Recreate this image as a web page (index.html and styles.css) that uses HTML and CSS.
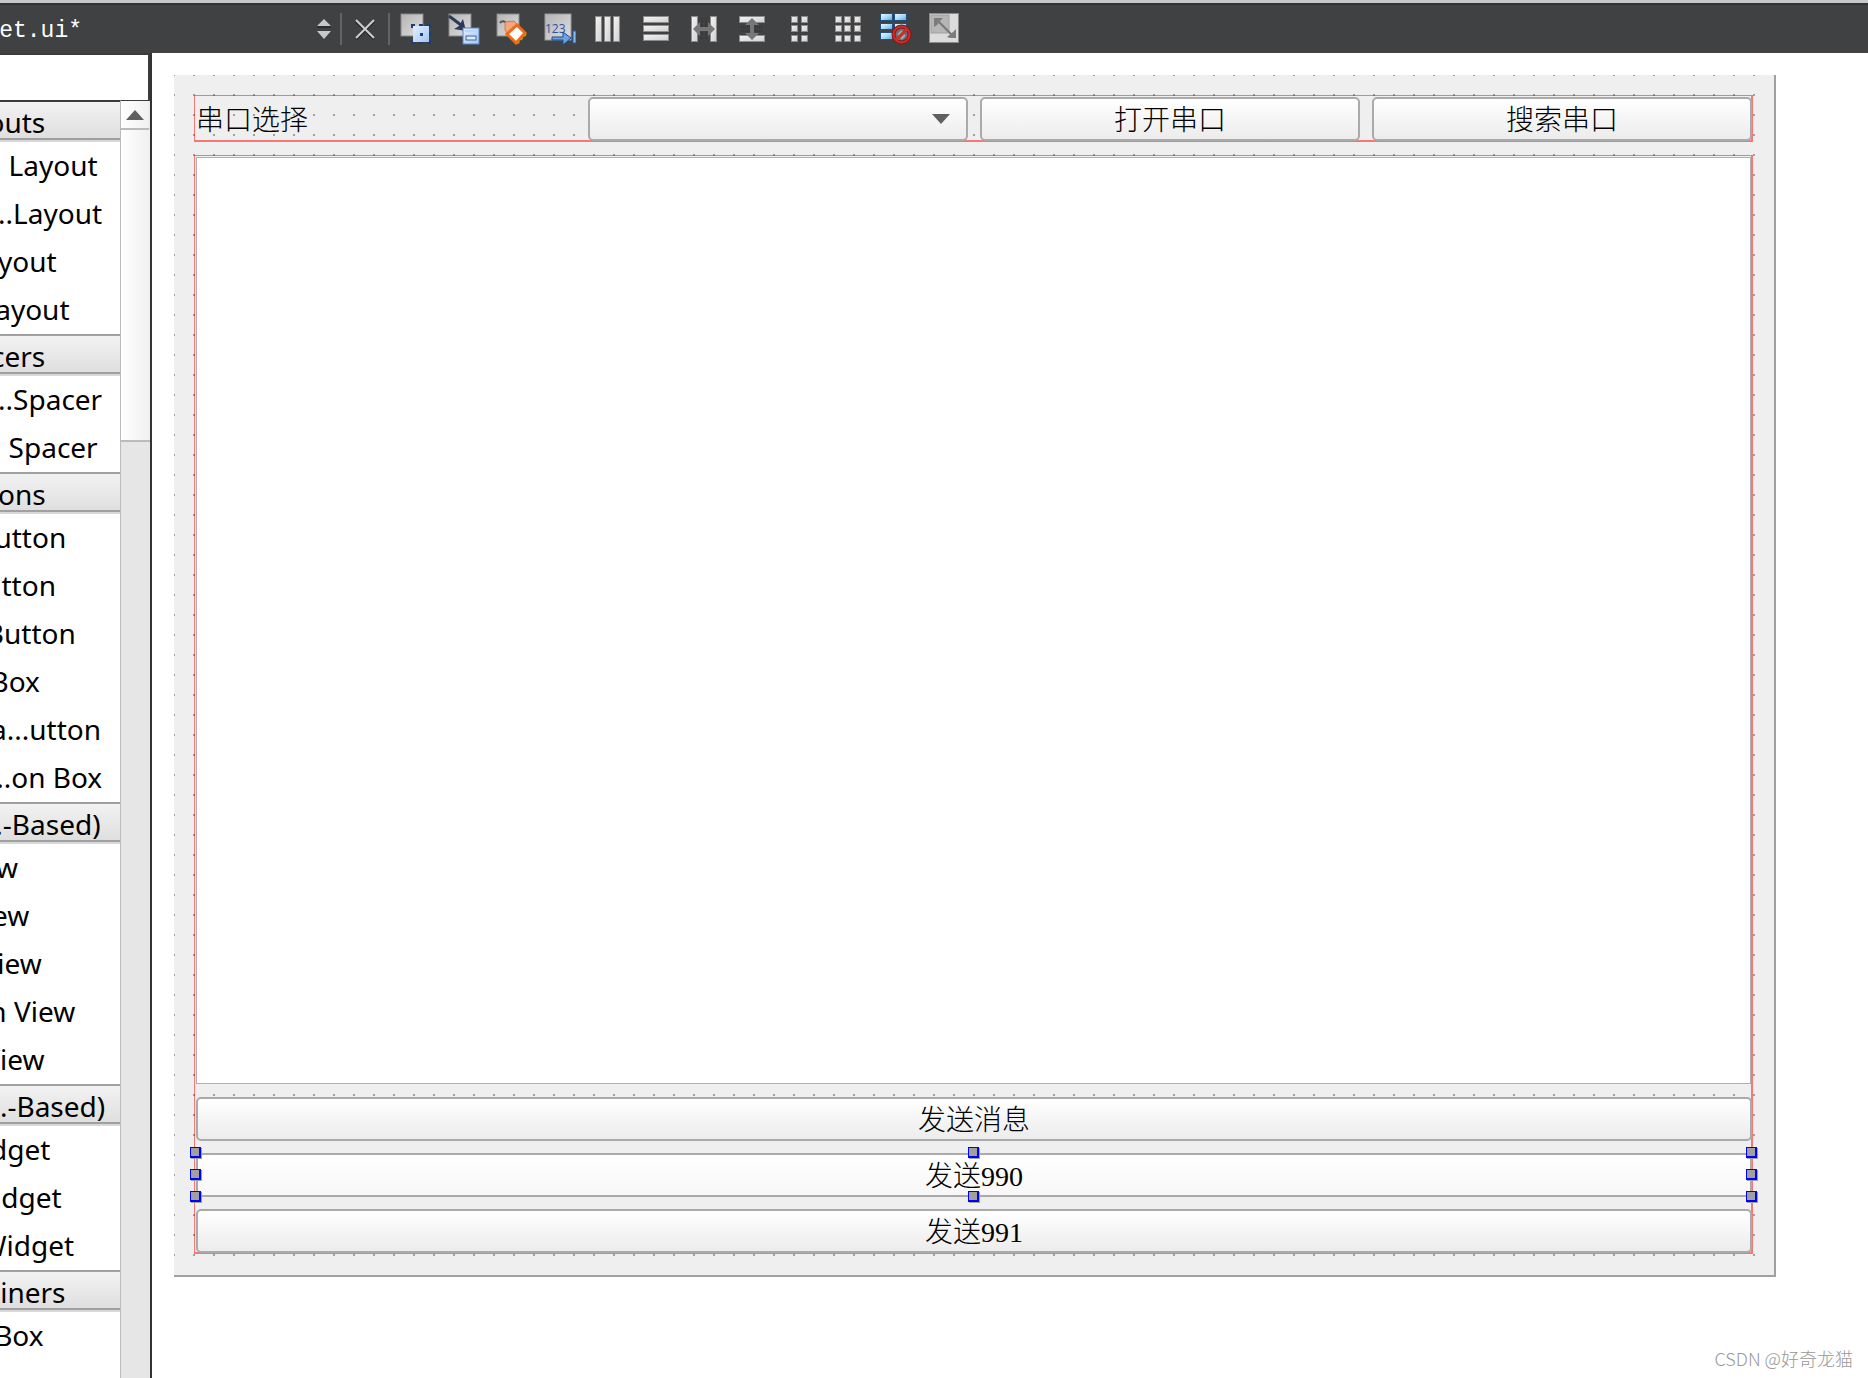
FILE: index.html
```html
<!DOCTYPE html>
<html lang="zh-CN">
<head>
<meta charset="utf-8">
<title>widget.ui</title>
<link rel="stylesheet" href="styles.css">
</head>
<body>
<svg class="defs" aria-hidden="true">
  <defs>
    <linearGradient id="steel" x1="0" y1="0" x2="1" y2="1">
      <stop offset="0" stop-color="#b4b4b4"/><stop offset="1" stop-color="#dedede"/>
    </linearGradient>
    <linearGradient id="sky" x1="0" y1="0" x2="1" y2="1">
      <stop offset="0" stop-color="#e4efff"/><stop offset="1" stop-color="#a4c6f4"/>
    </linearGradient>
    <linearGradient id="bar" x1="0" y1="0" x2="1" y2="1">
      <stop offset="0" stop-color="#f4f4f4"/><stop offset="1" stop-color="#d0d0d0"/>
    </linearGradient>
    <linearGradient id="water" x1="0" y1="0" x2="1" y2="1">
      <stop offset="0" stop-color="#f0faff"/><stop offset=".5" stop-color="#a8dcf8"/><stop offset="1" stop-color="#5ea4d8"/>
    </linearGradient>
  </defs>
</svg>
<header class="toolbar">
  <button class="file" type="button"><span class="file-name">widget.ui*</span>
    <svg class="updown" viewBox="0 0 14 20"><path d="M7 0L14 7H0zM7 20L14 12H0z" fill="#c8c8c8"/><path d="M0 8h14" stroke="#2b2c2d" stroke-width="2"/></svg>
  </button>
  <span class="sep"></span>
  <button class="tool close" type="button" aria-label="Close"><svg viewBox="0 0 32 32"><path d="M7 8L25 26M25 8L7 26" stroke="#252627" stroke-width="3"/><path d="M7 7L25 25M25 7L7 25" stroke="#cfcfcf" stroke-width="2"/></svg></button>
  <span class="sep"></span>
  <nav class="tools">
    <button class="tool" type="button" aria-label="Edit Widgets"><svg viewBox="0 0 32 32"><rect x="1" y="1" width="22" height="22" fill="url(#steel)" stroke="#888"/><path d="M12 15v-3h3M27 12h3v3M30 27v3h-3M15 30h-3v-3M19 12h4M19 30h4M30 19v4" fill="none" stroke="#1f3d70" stroke-width="2"/><rect x="13" y="13" width="16" height="16" fill="url(#sky)"/><rect x="20" y="20" width="3" height="3" fill="#1f3d70"/></svg></button>
    <button class="tool" type="button" aria-label="Edit Signals/Slots"><svg viewBox="0 0 32 32"><rect x="1" y="1" width="22" height="22" fill="url(#steel)" stroke="#888"/><path d="M1 3L13 12" stroke="#2a3a58" stroke-width="3"/><path d="M15 6l3 12-12-2 5-3z" fill="#2a3a58"/><rect x="15" y="15" width="16" height="16" fill="url(#sky)" stroke="#5c86bd"/><rect x="18" y="23" width="10" height="4" fill="#dcebff" stroke="#38679f"/><path d="M17 18h12" stroke="#bcd6fa" stroke-width="2"/></svg></button>
    <button class="tool" type="button" aria-label="Edit Buddies"><svg viewBox="0 0 32 32"><rect x="1" y="1" width="22" height="22" fill="url(#steel)" stroke="#888"/><path d="M4 10c2-3 5-2 7 1" fill="none" stroke="#555" stroke-width="2"/><path d="M9 9l9-1 5 5-10 10-4-6z" fill="#f8a57e" stroke="#d9764a"/><path d="M21 12l8 8-9 10-9-9z" fill="#fff" stroke="#ef6a12" stroke-width="3"/><path d="M30 21l-9 10" stroke="#c09018" stroke-width="2" stroke-dasharray="3 2"/></svg></button>
    <button class="tool" type="button" aria-label="Edit Tab Order"><svg viewBox="0 0 32 32"><rect x="1" y="1" width="26" height="26" fill="url(#steel)" stroke="#999"/><text x="1" y="20" class="digits">123</text><path d="M8 24h11v-5l8 6-8 7v-5H8z" fill="#6aa2e4" stroke="#1e4a8c"/><rect x="29" y="18" width="3" height="12" fill="#8ab8f0" stroke="#2a5da8"/></svg></button>
    <button class="tool" type="button" aria-label="Lay Out Horizontally"><svg viewBox="0 0 32 32"><g fill="url(#bar)" stroke="#8c8c8c"><rect x="3.500" y="3.500" width="6" height="25"/><rect x="12.500" y="3.500" width="6" height="25"/><rect x="21.500" y="3.500" width="6" height="25"/></g></svg></button>
    <button class="tool" type="button" aria-label="Lay Out Vertically"><svg viewBox="0 0 32 32"><g fill="url(#bar)" stroke="#8c8c8c"><rect x="3.500" y="3.500" width="25" height="6"/><rect x="3.500" y="12.500" width="25" height="6"/><rect x="3.500" y="21.500" width="25" height="6"/></g></svg></button>
    <button class="tool" type="button" aria-label="Horizontal Splitter"><svg viewBox="0 0 32 32"><g fill="url(#bar)" stroke="#8c8c8c"><rect x="3.500" y="3.500" width="6" height="25"/><rect x="22.500" y="3.500" width="6" height="25"/></g><path d="M14 5v22M18 5v22" stroke="#2c2d2e" stroke-dasharray="1 1"/><path d="M5 16l7-7v5h8v-5l7 7-7 7v-5h-8v5z" fill="#777"/></svg></button>
    <button class="tool" type="button" aria-label="Vertical Splitter"><svg viewBox="0 0 32 32"><g fill="url(#bar)" stroke="#8c8c8c"><rect x="3.500" y="3.500" width="25" height="6"/><rect x="3.500" y="22.500" width="25" height="6"/></g><path d="M5 14h22M5 18h22" stroke="#2c2d2e" stroke-dasharray="1 1"/><path d="M16 5l7 7h-5v8h5l-7 7-7-7h5v-8h-5z" fill="#777"/></svg></button>
    <button class="tool" type="button" aria-label="Lay Out in a Form"><svg viewBox="0 0 32 32"><g fill="url(#bar)" stroke="#8c8c8c"><rect x="7.500" y="3.500" width="6" height="6"/><rect x="17.500" y="3.500" width="6" height="6"/><rect x="7.500" y="12.500" width="6" height="6"/><rect x="17.500" y="12.500" width="6" height="6"/><rect x="7.500" y="22.500" width="6" height="6"/><rect x="17.500" y="22.500" width="6" height="6"/></g></svg></button>
    <button class="tool" type="button" aria-label="Lay Out in a Grid"><svg viewBox="0 0 32 32"><g fill="url(#bar)" stroke="#8c8c8c"><rect x="3.500" y="3.500" width="6" height="6"/><rect x="12.500" y="3.500" width="6" height="6"/><rect x="22.500" y="3.500" width="6" height="6"/><rect x="3.500" y="12.500" width="6" height="6"/><rect x="12.500" y="12.500" width="6" height="6"/><rect x="22.500" y="12.500" width="6" height="6"/><rect x="3.500" y="22.500" width="6" height="6"/><rect x="12.500" y="22.500" width="6" height="6"/><rect x="22.500" y="22.500" width="6" height="6"/></g></svg></button>
    <button class="tool" type="button" aria-label="Break Layout"><svg viewBox="0 0 32 32"><g fill="url(#water)" stroke="#24507e"><rect x=".5" y=".5" width="12" height="7"/><rect x="14.500" y=".5" width="12" height="7"/><rect x=".5" y="10.500" width="12" height="6"/><rect x="14.500" y="10.500" width="12" height="6"/><rect x=".5" y="19.500" width="12" height="7"/></g><circle cx="21.500" cy="21.500" r="8" fill="#6b6b70" stroke="#8c1414" stroke-width="4"/><circle cx="21.500" cy="21.500" r="8" fill="none" stroke="#c8302c" stroke-width="2"/><path d="M18 22l4-4M21 26l4-4" stroke="#a8a8b0" stroke-width="2"/><path d="M16 27L27 16" stroke="#c8302c" stroke-width="3"/></svg></button>
    <button class="tool" type="button" aria-label="Adjust Size"><svg viewBox="0 0 32 32"><rect x="1.500" y=".5" width="29" height="29" fill="#dcdcdc" stroke="#8a8a8a"/><rect x="3" y="2" width="18" height="18" fill="#b6b6b6" stroke="#a0a0a0"/><path d="M9 7L26 24" stroke="#777" stroke-width="2"/><path d="M6 5h9l-3 3-3 4-3 2zM28 25v-9l-3 3-6 5 3 1z" fill="#7c7c7c"/></svg></button>
  </nav>
</header>
<div class="workspace">
  <aside class="sidebar">
    <input class="filter" type="text" aria-label="Filter">
    <div class="box-area">
      <div class="clip">
        <div class="widget-box">
          <h2>Layouts</h2>
          <ul><li>Vertical Layout</li><li>Horizo...Layout</li><li>Grid Layout</li><li>Form Layout</li></ul>
          <h2>Spacers</h2>
          <ul><li>Horizo...Spacer</li><li>Vertical Spacer</li></ul>
          <h2>Buttons</h2>
          <ul><li>Push Button</li><li>Tool Button</li><li>Radio Button</li><li>Check Box</li><li>Comma...utton</li><li>Dialog...on Box</li></ul>
          <h2>Item Vi...-Based)</h2>
          <ul><li>List View</li><li>Tree View</li><li>Table View</li><li>Column View</li><li>Undo View</li></ul>
          <h2>Item Wi...-Based)</h2>
          <ul><li>List Widget</li><li>Tree Widget</li><li>Table Widget</li></ul>
          <h2>Containers</h2>
          <ul><li>Group Box</li></ul>
        </div>
      </div>
      <div class="scrollbar">
        <button class="scroll-up" type="button" aria-label="Scroll up"><svg viewBox="0 0 18 10"><path d="M9 0L18 10H0z" fill="#606060"/></svg></button>
        <div class="thumb"></div>
      </div>
    </div>
  </aside>
  <main class="canvas">
    <form class="form">
      <div class="layout row">
        <label for="port">串口选择</label>
        <div class="combo"><select id="port"><option></option></select></div>
        <button class="push" type="button">打开串口</button>
        <button class="push" type="button">搜索串口</button>
      </div>
      <div class="layout column">
        <textarea class="log" aria-label="Log"></textarea>
        <button class="push" type="button">发送消息</button>
        <div class="selected">
          <button class="push" type="button">发送990</button>
          <i class="handle top left"></i><i class="handle top center"></i><i class="handle top right"></i>
          <i class="handle middle left"></i><i class="handle middle right"></i>
          <i class="handle bottom left"></i><i class="handle bottom center"></i><i class="handle bottom right"></i>
        </div>
        <button class="push" type="button">发送991</button>
      </div>
    </form>
    <p class="watermark">CSDN @好奇龙猫</p>
  </main>
</div>
</body>
</html>
```
FILE: styles.css
```css
* { box-sizing: border-box; }

body {
  margin: 0;
  min-height: 100vh;
  display: flex;
  flex-direction: column;
  background: #fff;
  color: #000;
  font-family: "Noto Sans", "Noto Sans CJK SC", sans-serif;
}

button, input, select, textarea { margin: 0; padding: 0; border: 0; border-radius: 0; font: inherit; color: inherit; background: none; }
ul { margin: 0; padding: 0; list-style: none; }
svg { display: block; }
.defs { position: absolute; width: 0; height: 0; }

/* Toolbar */
.toolbar {
  flex: none;
  height: 53px;
  display: flex;
  align-items: center;
  overflow: hidden;
  background: #404142;
  border-top: 3px solid #c8c8c8;
  box-shadow: inset 0 2px #333;
  padding-top: 2px;
}
.file { flex: none; width: 340px; display: flex; align-items: center; justify-content: space-between; padding-right: 9px; }
.file-name { margin-left: -56px; padding-top: 4px; color: #fff; font: 23px/32px "Liberation Mono", monospace; }
.updown { width: 14px; height: 20px; }
.sep { flex: none; width: 2px; height: 32px; background: #626364; }
.tool { flex: none; width: 32px; height: 32px; }
.tool svg { width: 32px; height: 32px; }
.close { margin: 0 7px; }
.tools { display: flex; gap: 16px; margin-left: 10px; }
.digits { font: 12px "Open Sans", sans-serif; fill: #2a559c; }

/* Widget box */
.workspace { flex: 1; display: flex; }
.sidebar { flex: none; width: 152px; display: flex; flex-direction: column; border-right: 2px solid #333; background: #fff; }
.filter { height: 47px; border: solid #3c3c3c; border-width: 2px 2px 0 0; }
.box-area { flex: 1; display: flex; }
.clip { flex: 1; display: flex; justify-content: flex-end; overflow: hidden; }
.widget-box { flex: none; width: 252px; font-size: 28px; }
.widget-box h2 {
  margin: 0;
  height: 42px;
  border-top: 2px solid #a0a0a0;
  border-bottom: 2px solid #d8d8d8;
  box-shadow: inset 0 -2px #a0a0a0;
  background: linear-gradient(#f2f2f2, #dedede);
  font-size: 28px;
  font-weight: 400;
  line-height: 40px;
  text-align: center;
  white-space: nowrap;
}
.widget-box h2:first-child { border-top-color: #3c3c3c; }
.widget-box li { height: 48px; padding-left: 36px; line-height: 46px; white-space: nowrap; }
.scrollbar { flex: none; width: 30px; border: solid #bbb; border-width: 0 0 0 1px; border-top: 1px solid #3c3c3c; background: #e6e6e6; }
.scroll-up { display: flex; align-items: center; justify-content: center; width: 28px; height: 29px; border-bottom: 2px solid #bbb; background: linear-gradient(90deg, #fff, #f0f0f0); }
.scroll-up svg { width: 18px; height: 10px; }
.thumb { height: 312px; border-bottom: 2px solid #bbb; background: linear-gradient(90deg, #fff, #f0f0f0); }

/* Form editor */
.canvas { flex: 1; min-width: 0; display: flex; flex-direction: column; padding: 22px 0 0 22px; }
.form {
  flex: 1;
  display: flex;
  flex-direction: column;
  gap: 13px;
  margin-right: 92px;
  padding: 20px 21px 21px 20px;
  border: solid #a0a0a0;
  border-width: 0 2px 2px 0;
  background:
    linear-gradient(#efefef, #efefef) right / 2px 100% no-repeat,
    linear-gradient(#efefef, #efefef) bottom / 100% 2px no-repeat,
    conic-gradient(from 270deg at 2px 2px, #a0a0a0 90deg, transparent 0) -1px -1px / 20px 20px,
    #efefef;
  font: 28px/40px "Liberation Serif", "Noto Sans CJK SC", serif;
  font-weight: 300;
}
.layout { position: relative; z-index: 0; padding: 2px 1px 1px 2px; }
.layout::before { content: ""; position: absolute; z-index: -1; inset: 0; border: solid rgba(255, 0, 0, .5); border-width: 1px 2px 2px 1px; }
.row { display: grid; grid-template-columns: repeat(4, 1fr); gap: 12px; }
.row label { padding-top: 4px; }
.column { flex: 1; display: flex; flex-direction: column; gap: 12px; }
.push, .combo {
  display: block;
  width: 100%;
  height: 44px;
  border: 2px solid #aaa;
  border-radius: 5px;
  background: linear-gradient(#fff, #ececec);
}
.push { padding-top: 3px; line-height: 37px; }
.combo { position: relative; }
.combo select { appearance: none; width: 100%; height: 100%; }
.combo::after { content: ""; position: absolute; right: 16px; top: 15px; border: solid transparent; border-width: 10px 9px 0; border-top-color: #606060; }
.log { flex: 1; min-height: 400px; margin: 0 1px 1px 0; border: 1px solid #b0b0b0; background: #fff; resize: none; }
.selected { position: relative; }
.selected .push { border-radius: 0; background: linear-gradient(#fff, #f7f7f7); }
.handle { position: absolute; width: 11px; height: 11px; margin: -6px; border: solid #00f; border-width: 1px 2px 2px 1px; background: #a0a0a0; box-shadow: 1px 1px #a0a0a0; }
.top { top: 0; }
.middle { top: 50%; }
.bottom { top: 100%; }
.left { left: 0; }
.center { left: 50%; }
.right { left: 100%; }
.watermark { margin: 0; padding: 69px 15px 8px 0; text-align: right; color: #999; font: 18px/24px "Noto Sans CJK SC", sans-serif; font-weight: 300; }
```
